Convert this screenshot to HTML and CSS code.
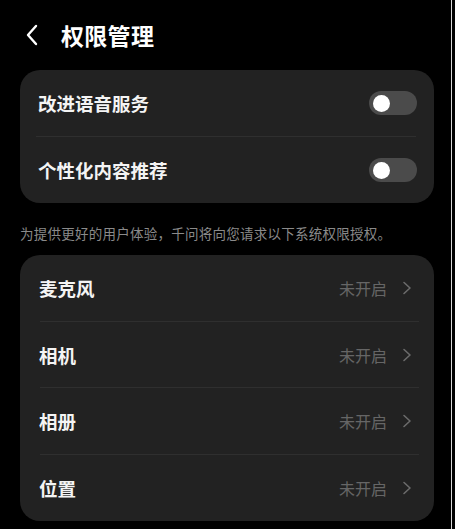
FILE: index.html
```html
<!DOCTYPE html>
<html lang="zh-CN">
<head>
<meta charset="utf-8">
<title>权限管理</title>
<link rel="stylesheet" href="styles.css">
</head>
<body>
<div class="screen">
  <header class="header">
    <svg class="back" width="14" height="22" viewBox="0 0 14 22" aria-hidden="true">
      <path d="M11 2 L3 11 L11 20" fill="none" stroke="#fff" stroke-width="2.4" stroke-linecap="round" stroke-linejoin="round"/>
    </svg>
    <h1 class="title">权限管理</h1>
  </header>

  <section class="card">
    <div class="row">
      <span class="label">改进语音服务</span>
      <span class="toggle"><span class="knob"></span></span>
    </div>
    <div class="divider"></div>
    <div class="row">
      <span class="label">个性化内容推荐</span>
      <span class="toggle"><span class="knob"></span></span>
    </div>
  </section>

  <p class="desc">为提供更好的用户体验，千问将向您请求以下系统权限授权。</p>

  <section class="card card-list">
    <div class="row">
      <span class="label">麦克风</span>
      <span class="status">未开启<svg class="chev" width="10" height="14" viewBox="0 0 10 14" aria-hidden="true"><path d="M2 1.5 L8 7 L2 12.5" fill="none" stroke="#6b6b6b" stroke-width="1.6" stroke-linecap="round" stroke-linejoin="round"/></svg></span>
    </div>
    <div class="divider"></div>
    <div class="row">
      <span class="label">相机</span>
      <span class="status">未开启<svg class="chev" width="10" height="14" viewBox="0 0 10 14" aria-hidden="true"><path d="M2 1.5 L8 7 L2 12.5" fill="none" stroke="#6b6b6b" stroke-width="1.6" stroke-linecap="round" stroke-linejoin="round"/></svg></span>
    </div>
    <div class="divider"></div>
    <div class="row">
      <span class="label">相册</span>
      <span class="status">未开启<svg class="chev" width="10" height="14" viewBox="0 0 10 14" aria-hidden="true"><path d="M2 1.5 L8 7 L2 12.5" fill="none" stroke="#6b6b6b" stroke-width="1.6" stroke-linecap="round" stroke-linejoin="round"/></svg></span>
    </div>
    <div class="divider"></div>
    <div class="row">
      <span class="label">位置</span>
      <span class="status">未开启<svg class="chev" width="10" height="14" viewBox="0 0 10 14" aria-hidden="true"><path d="M2 1.5 L8 7 L2 12.5" fill="none" stroke="#6b6b6b" stroke-width="1.6" stroke-linecap="round" stroke-linejoin="round"/></svg></span>
    </div>
  </section>
</div>
</body>
</html>
```

FILE: styles.css
```css
html {
  background: #000;
}
body {
  margin: 0;
  background: #000;
  font-family: "Noto Sans CJK SC", "Noto Sans", sans-serif;
  color: #fff;
}
.screen {
  width: 452px;
  min-height: 529px;
  box-sizing: border-box;
  padding: 0 17px 0 20px;
  border-right: 1px solid #d8d8d8;
  overflow: hidden;
}
.header {
  height: 70px;
  display: flex;
  align-items: center;
  padding-left: 5px;
  gap: 22px;
}
.back {
  display: block;
}
.title {
  margin: 0;
  font-size: 23px;
  font-weight: 700;
  line-height: 1;
  letter-spacing: 0.3px;
}
.card {
  background: #222222;
  border-radius: 20px;
  display: flex;
  flex-direction: column;
}
.row {
  height: 66px;
  display: flex;
  align-items: center;
  justify-content: space-between;
  padding: 0 17px 0 18px;
}
.card-list .row {
  height: 65.7px;
  padding: 0 22px 0 19px;
}
.label {
  font-size: 18.5px;
  font-weight: 700;
  color: #f4f4f4;
}
.divider {
  height: 1px;
  background: #2f2f2f;
  margin: 0 18px 0 16px;
}
.card-list .divider {
  margin: 0 15px 0 20px;
}
.toggle {
  width: 48px;
  height: 24px;
  border-radius: 12px;
  background: #4b4b4b;
  display: flex;
  align-items: center;
  padding-left: 4px;
  box-sizing: border-box;
}
.knob {
  width: 17px;
  height: 17px;
  border-radius: 50%;
  background: #fff;
}
.desc {
  margin: 20px 0 12px 0;
  font-size: 13.5px;
  line-height: 20px;
  color: #8a8a8a;
  white-space: nowrap;
  letter-spacing: 0.25px;
  font-feature-settings: "fwid" 1;
}
.status {
  display: flex;
  align-items: center;
  gap: 15px;
  font-size: 16px;
  color: #666;
}
.chev {
  display: block;
}
```
